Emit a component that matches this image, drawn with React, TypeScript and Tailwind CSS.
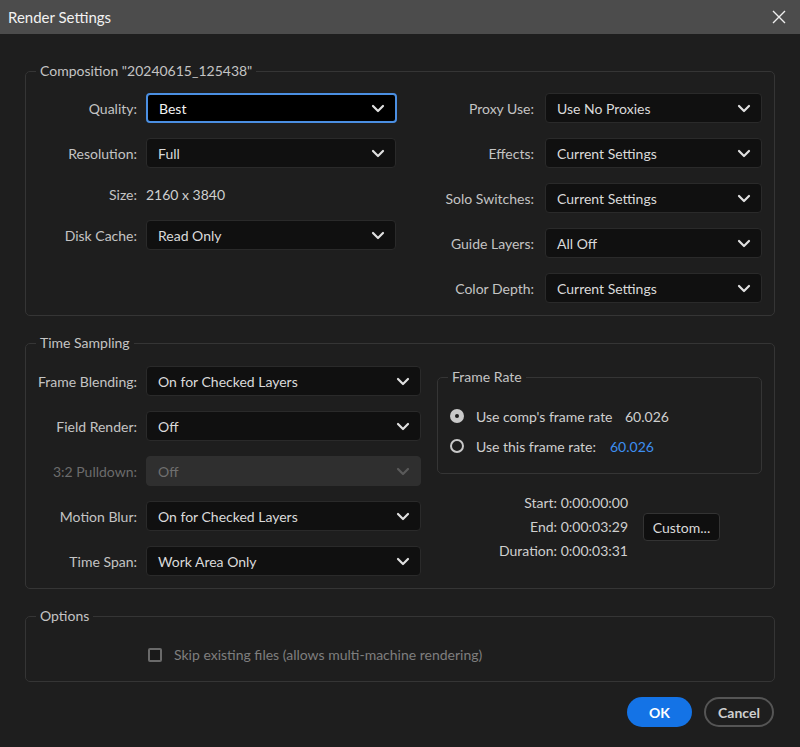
import React from "react";

const font = { fontFamily: "Lato, 'Open Sans', sans-serif" };

const Chevron = ({ className }: { className?: string }) => (
  <svg width="14" height="9" viewBox="0 0 14 9" className={className}>
    <path d="M2 2l5 5 5-5" fill="none" stroke="currentColor" strokeWidth="2.2" strokeLinecap="round" strokeLinejoin="round" />
  </svg>
);

type SelectProps = { value: string; width: string; focused?: boolean; disabled?: boolean };

const Select = ({ value, width, focused, disabled }: SelectProps) => {
  let box = "bg-[#101010] border border-[#2a2a2a] text-[#dadada]";
  let chev = "text-[#e0e0e0]";
  if (focused) box = "bg-black border-2 border-[#4b8fe2] text-[#f2f2f2]";
  if (disabled) {
    box = "bg-[#2f2f2f] border border-[#2f2f2f] text-[#6f6f6f]";
    chev = "text-[#5a5a5a]";
  }
  return (
    <div className={`${width} ${box} flex h-[30px] shrink-0 items-center justify-between rounded-[4px] pl-[11px] pr-[10px] text-[14px]`}>
      <span>{value}</span>
      <Chevron className={chev} />
    </div>
  );
};

const Row = ({ label, labelW, children, dim }: { label: string; labelW: string; children: React.ReactNode; dim?: boolean }) => (
  <div className="flex items-center">
    <div className={`${labelW} shrink-0 text-right text-[14px] ${dim ? "text-[#6c6c6c]" : "text-[#c4c4c4]"}`}>{label}</div>
    <div className="ml-[9px]">{children}</div>
  </div>
);

const Group = ({ title, className, children }: { title: string; className?: string; children: React.ReactNode }) => (
  <fieldset className={`rounded-[5px] border border-[#353535] ${className ?? ""}`}>
    <legend className="ml-[10px] px-[4px] text-[14px] leading-[20px] text-[#c4c4c4]">{title}</legend>
    {children}
  </fieldset>
);

const Radio = ({ on }: { on?: boolean }) =>
  on ? (
    <span className="flex h-[14px] w-[14px] items-center justify-center rounded-full bg-[#c9c9c9]">
      <span className="h-[4px] w-[4px] rounded-full bg-[#1e1e1e]" />
    </span>
  ) : (
    <span className="h-[14px] w-[14px] rounded-full border-2 border-[#c9c9c9] bg-[#1e1e1e]" />
  );

export default function App() {
  return (
    <div className="flex h-[747px] w-[800px] flex-col overflow-hidden bg-[#1e1e1e]" style={font}>
      {/* title bar */}
      <div className="flex h-[34px] shrink-0 items-center justify-between bg-[#4c4c4c] pl-[8px] pr-[14px]">
        <span className="text-[15px] text-[#f2f2f2]">Render Settings</span>
        <svg width="14" height="14" viewBox="0 0 14 14">
          <path d="M1 1l12 12M13 1L1 13" stroke="#eeeeee" strokeWidth="1.4" />
        </svg>
      </div>

      {/* Composition */}
      <Group title={'Composition "20240615_125438"'} className="mx-[25px] mt-[27px]">
        <div className="flex pb-[12px] pt-[12px]">
          <div className="flex w-[370px] flex-col gap-[15px]">
            <Row label="Quality:" labelW="w-[111px]">
              <Select value="Best" width="w-[251px]" focused />
            </Row>
            <Row label="Resolution:" labelW="w-[111px]">
              <Select value="Full" width="w-[250px]" />
            </Row>
            <div className="flex h-[22px] items-center">
              <div className="w-[111px] text-right text-[14px] text-[#c4c4c4]">Size:</div>
              <div className="ml-[9px] text-[14px] text-[#cfcfcf]">2160 x 3840</div>
            </div>
            <Row label="Disk Cache:" labelW="w-[111px]">
              <Select value="Read Only" width="w-[250px]" />
            </Row>
          </div>
          <div className="ml-[24px] flex flex-col gap-[15px]">
            {[
              ["Proxy Use:", "Use No Proxies"],
              ["Effects:", "Current Settings"],
              ["Solo Switches:", "Current Settings"],
              ["Guide Layers:", "All Off"],
              ["Color Depth:", "Current Settings"],
            ].map(([l, v]) => (
              <div key={l} className="flex items-center">
                <div className="w-[114px] text-right text-[14px] text-[#c4c4c4]">{l}</div>
                <div className="ml-[11px]">
                  <Select value={v} width="w-[217px]" />
                </div>
              </div>
            ))}
          </div>
        </div>
      </Group>

      {/* Time Sampling */}
      <Group title="Time Sampling" className="mx-[25px] mt-[17px]">
        <div className="flex pb-[12px] pt-[13px]">
          <div className="flex w-[395px] flex-col gap-[15px]">
            <Row label="Frame Blending:" labelW="w-[111px]">
              <Select value="On for Checked Layers" width="w-[275px]" />
            </Row>
            <Row label="Field Render:" labelW="w-[111px]">
              <Select value="Off" width="w-[275px]" />
            </Row>
            <Row label="3:2 Pulldown:" labelW="w-[111px]" dim>
              <Select value="Off" width="w-[275px]" disabled />
            </Row>
            <Row label="Motion Blur:" labelW="w-[111px]">
              <Select value="On for Checked Layers" width="w-[275px]" />
            </Row>
            <Row label="Time Span:" labelW="w-[111px]">
              <Select value="Work Area Only" width="w-[275px]" />
            </Row>
          </div>
          <div className="ml-[16px] flex flex-col">
            <Group title="Frame Rate" className="mt-[1px] w-[325px]">
              <div className="flex flex-col gap-[6px] pb-[15px] pl-[12px] pt-[17px] text-[14px] text-[#cfcfcf]">
                <div className="flex h-[24px] items-center">
                  <Radio on />
                  <span className="ml-[12px] w-[149px]">Use comp's frame rate</span>
                  <span>60.026</span>
                </div>
                <div className="flex h-[24px] items-center">
                  <Radio />
                  <span className="ml-[12px] w-[134px]">Use this frame rate:</span>
                  <span className="text-[#3d8ef0]">60.026</span>
                </div>
              </div>
            </Group>
            <div className="mt-[17px] flex items-center">
              <div className="w-[191px] text-right text-[14px] leading-[24px] text-[#cfcfcf]">
                <div>Start: 0:00:00:00</div>
                <div>End: 0:00:03:29</div>
                <div>Duration: 0:00:03:31</div>
              </div>
              <button className="ml-[15px] h-[28px] w-[77px] rounded-[4px] border border-[#333333] bg-[#0f0f0f] text-[14px] text-[#dadada]">
                Custom...
              </button>
            </div>
          </div>
        </div>
      </Group>

      {/* Options */}
      <Group title="Options" className="mx-[25px] mt-[17px]">
        <div className="flex items-center pb-[16px] pl-[122px] pt-[19px]">
          <span className="h-[14px] w-[14px] rounded-[2px] border-2 border-[#6a6a6a] bg-[#1a1a1a]" />
          <span className="ml-[12px] text-[14px] leading-[20px] text-[#7f7f7f]">
            Skip existing files (allows multi-machine rendering)
          </span>
        </div>
      </Group>

      {/* buttons */}
      <div className="mt-[15px] flex justify-end gap-[12px] pr-[26px]">
        <button className="h-[30px] w-[65px] rounded-full bg-[#1473e6] text-[14px] font-bold text-white">OK</button>
        <button className="h-[30px] w-[70px] rounded-full border-2 border-[#555555] text-[14px] font-bold text-[#cfcfcf]">
          Cancel
        </button>
      </div>
    </div>
  );
}
